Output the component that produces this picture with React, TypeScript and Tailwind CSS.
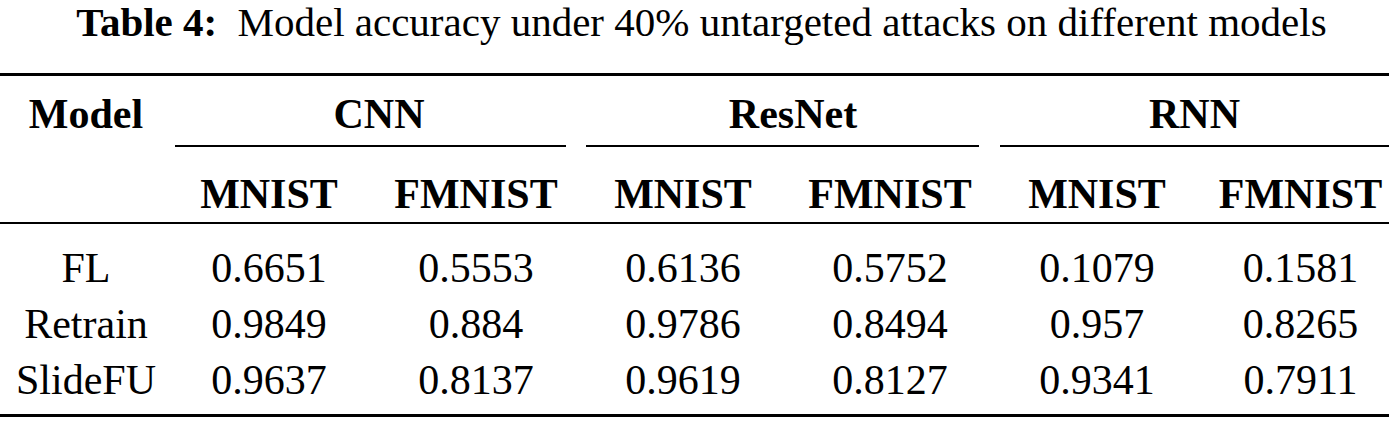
import React from "react";

const grid = "grid grid-cols-[172px_194px_220px_194px_220px_194px_195px]";

const rows = [
    { name: "FL", vals: ["0.6651", "0.5553", "0.6136", "0.5752", "0.1079", "0.1581"] },
    { name: "Retrain", vals: ["0.9849", "0.884", "0.9786", "0.8494", "0.957", "0.8265"] },
    { name: "SlideFU", vals: ["0.9637", "0.8137", "0.9619", "0.8127", "0.9341", "0.7911"] },
];

const groups = ["CNN", "ResNet", "RNN"];
const datasets = ["MNIST", "FMNIST", "MNIST", "FMNIST", "MNIST", "FMNIST"];

function Cell({ children, last }: { children: React.ReactNode; last?: boolean }) {
    return <div className={`text-center ${last ? "pl-[18px]" : ""}`}>{children}</div>;
}

export default function App() {
    return (
        <div className="w-[1391px] h-[421px] overflow-hidden bg-white text-black font-[Liberation_Serif,serif]">
            <div className="h-[44px] pl-[12px] text-[41px] leading-[44px] text-center whitespace-nowrap">
                <span className="font-bold mr-[10px]">Table 4:</span> Model accuracy under 40% untargeted attacks on different models
            </div>

            <div className="w-[1389px] mt-[29px] h-[3px] bg-black" />

            <div className={`${grid} mt-[10px] text-[42px] leading-[56px] font-bold`}>
                <div className="text-center">Model</div>
                {groups.map((g) => (
                    <div key={g} className="col-span-2 text-center">{g}</div>
                ))}
            </div>

            <div className={`${grid} mt-[3px]`}>
                <div />
                {groups.map((g, i) => (
                    <div key={g} className={`col-span-2 h-[2px] bg-black ${i === 0 ? "ml-[3px] mr-[20px]" : i === 1 ? "mr-[21px]" : ""}`} />
                ))}
            </div>

            <div className={`${grid} mt-[19px] text-[42px] leading-[56px] font-bold`}>
                <div />
                {datasets.map((d, i) => (
                    <Cell key={i} last={i === 5}>{d}</Cell>
                ))}
            </div>

            <div className="w-[1389px] h-[2px] bg-black" />

            <div className="pt-[16px] pb-[6px] text-[42px] leading-[56px]">
                {rows.map((r) => (
                    <div key={r.name} className={grid}>
                        <div className="text-center">{r.name}</div>
                        {r.vals.map((v, i) => (
                            <Cell key={i} last={i === 5}>{v}</Cell>
                        ))}
                    </div>
                ))}
            </div>

            <div className="w-[1389px] h-[3px] bg-black" />
        </div>
    );
}
